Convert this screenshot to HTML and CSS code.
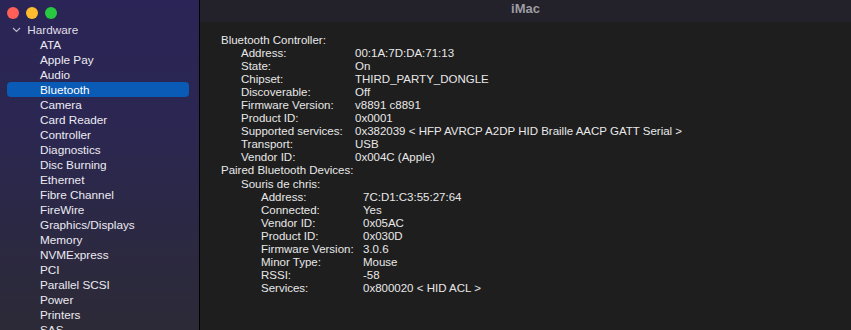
FILE: index.html
```html
<!DOCTYPE html>
<html lang="en">
<head>
  <meta charset="UTF-8">
  <title>iMac</title>
  <link rel="stylesheet" href="styles.css">
</head>
<body>

<div class="window">
  <aside class="sidebar">
    <div class="lights">
      <span class="light red"></span>
      <span class="light yellow"></span>
      <span class="light green"></span>
    </div>
    <ul class="tree">
      <li class="group">
        <svg class="chevron" width="9" height="6" viewBox="0 0 9 6"><path d="M1 1 L4.5 4.5 L8 1" fill="none" stroke="#b9b6cc" stroke-width="1.2"/></svg>
        Hardware
      </li>
      <li>ATA</li>
      <li>Apple Pay</li>
      <li>Audio</li>
      <li class="selected">Bluetooth</li>
      <li>Camera</li>
      <li>Card Reader</li>
      <li>Controller</li>
      <li>Diagnostics</li>
      <li>Disc Burning</li>
      <li>Ethernet</li>
      <li>Fibre Channel</li>
      <li>FireWire</li>
      <li>Graphics/Displays</li>
      <li>Memory</li>
      <li>NVMExpress</li>
      <li>PCI</li>
      <li>Parallel SCSI</li>
      <li>Power</li>
      <li>Printers</li>
      <li>SAS</li>
    </ul>
  </aside>

  <main class="main">
    <div class="titlebar">iMac</div>
    <div class="report">
      <div class="row">Bluetooth Controller:</div>
      <div class="section">
        <div class="row"><span class="key">Address:</span>00:1A:7D:DA:71:13</div>
        <div class="row"><span class="key">State:</span>On</div>
        <div class="row"><span class="key">Chipset:</span>THIRD_PARTY_DONGLE</div>
        <div class="row"><span class="key">Discoverable:</span>Off</div>
        <div class="row"><span class="key">Firmware Version:</span>v8891 c8891</div>
        <div class="row"><span class="key">Product ID:</span>0x0001</div>
        <div class="row"><span class="key">Supported services:</span>0x382039 &lt; HFP AVRCP A2DP HID Braille AACP GATT Serial &gt;</div>
        <div class="row"><span class="key">Transport:</span>USB</div>
        <div class="row"><span class="key">Vendor ID:</span>0x004C (Apple)</div>
      </div>
      <div class="row">Paired Bluetooth Devices:</div>
      <div class="section">
        <div class="row">Souris de chris:</div>
        <div class="section device">
          <div class="row"><span class="key">Address:</span>7C:D1:C3:55:27:64</div>
          <div class="row"><span class="key">Connected:</span>Yes</div>
          <div class="row"><span class="key">Vendor ID:</span>0x05AC</div>
          <div class="row"><span class="key">Product ID:</span>0x030D</div>
          <div class="row"><span class="key">Firmware Version:</span>3.0.6</div>
          <div class="row"><span class="key">Minor Type:</span>Mouse</div>
          <div class="row"><span class="key">RSSI:</span>-58</div>
          <div class="row"><span class="key">Services:</span>0x800020 &lt; HID ACL &gt;</div>
        </div>
      </div>
    </div>
  </main>
</div>

</body>
</html>
```

FILE: styles.css
```css
body {
  margin: 0;
  background: #1e1e1e;
  font-family: "Liberation Sans", Arial, sans-serif;
  font-size: 11.5px;
  color: #e8e8e8;
  overflow: hidden;
}

.window {
  display: flex;
  height: 330px;
}

.sidebar {
  width: 199px;
  flex-shrink: 0;
  background: linear-gradient(to bottom, #2a2556 0%, #2b2751 40%, #2c2a36 100%);
  border-right: 1px solid #000;
  overflow: hidden;
}

.lights {
  display: flex;
  gap: 7px;
  padding: 7px 0 0 7px;
  height: 15px;
}

.light {
  width: 12px;
  height: 12px;
  border-radius: 50%;
}

.red { background: #fe5f57; }
.yellow { background: #febc2e; }
.green { background: #28c840; }

.tree {
  list-style: none;
  margin: 0;
  padding: 0;
  font-size: 11.75px;
}

.tree li {
  height: 15px;
  line-height: 15px;
  padding-left: 33px;
  margin: 0 10px 0 7px;
  color: #ecebf2;
  white-space: nowrap;
}

.tree li.group {
  padding-left: 5px;
  color: #e0dfe8;
}

.chevron {
  margin-right: 3px;
  vertical-align: 1px;
}

.tree li.selected {
  background: #0a5bb5;
  border-radius: 4px;
  color: #fff;
}

.main {
  flex: 1;
  display: flex;
  flex-direction: column;
}

.titlebar {
  height: 22px;
  line-height: 18px;
  background: #23212a;
  text-align: center;
  color: #9d9ca3;
  font-weight: bold;
  font-size: 13px;
}

.report {
  padding: 12px 0 0 21px;
}

.row {
  height: 13.05px;
  line-height: 13px;
  white-space: nowrap;
}

.section {
  padding-left: 20px;
}

.key {
  display: inline-block;
  width: 114px;
}

.device .key {
  width: 102px;
}
```
